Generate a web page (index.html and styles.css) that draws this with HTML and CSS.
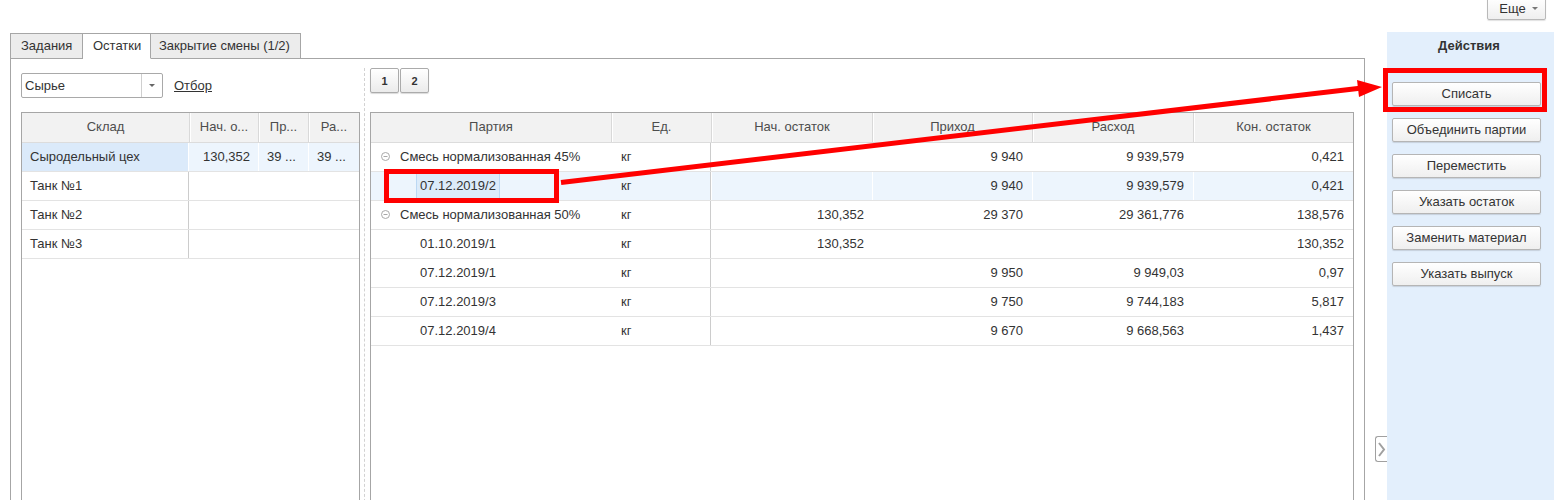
FILE: index.html
```html
<!DOCTYPE html>
<html lang="ru">
<head>
<meta charset="utf-8">
<title>Остатки</title>
<link rel="stylesheet" href="styles.css">
</head>
<body>
<div class="page">
  <div class="topbar">
    <button class="more-btn">Еще <span class="caret"></span></button>
  </div>
  <div class="main">
    <div class="workarea">
      <div class="tabs">
        <div class="tab">Задания</div>
        <div class="tab active">Остатки</div>
        <div class="tab wide">Закрытие смены (1/2)</div>
      </div>
      <div class="tabpanel">
        <div class="leftcol">
          <div class="filter-row">
            <div class="combo">
              <span class="combo-text">Сырье</span>
              <span class="combo-btn"><span class="caret dark"></span></span>
            </div>
            <a class="link">Отбор</a>
          </div>
          <div class="grid grid-left">
            <div class="ghead">
              <div class="hc first">Склад</div>
              <div class="hc">Нач. о...</div>
              <div class="hc">Пр...</div>
              <div class="hc">Ра...</div>
            </div>
            <div class="grow sel">
              <div class="c sep cur">Сыродельный цех</div>
              <div class="c num wsep">130,352</div>
              <div class="c wsep">39 ...</div>
              <div class="c wsep">39 ...</div>
            </div>
            <div class="grow">
              <div class="c sep">Танк №1</div><div class="c"></div><div class="c"></div><div class="c"></div>
            </div>
            <div class="grow">
              <div class="c sep">Танк №2</div><div class="c"></div><div class="c"></div><div class="c"></div>
            </div>
            <div class="grow">
              <div class="c sep">Танк №3</div><div class="c"></div><div class="c"></div><div class="c"></div>
            </div>
          </div>
        </div>
        <div class="splitter"></div>
        <div class="rightcol">
          <div class="pager">
            <button class="pbtn">1</button>
            <button class="pbtn">2</button>
          </div>
          <div class="grid grid-right">
            <div class="ghead">
              <div class="hc first">Партия</div>
              <div class="hc">Ед.</div>
              <div class="hc">Нач. остаток</div>
              <div class="hc">Приход</div>
              <div class="hc">Расход</div>
              <div class="hc">Кон. остаток</div>
            </div>
            <div class="grow">
              <div class="c tree"><svg class="ticon" width="9" height="9" viewBox="0 0 9 9"><circle cx="4.5" cy="4.5" r="4" fill="none" stroke="#a8a8a8"/><line x1="2.5" y1="4.5" x2="6.5" y2="4.5" stroke="#a8a8a8"/></svg>Смесь нормализованная 45%</div>
              <div class="c sep">кг</div>
              <div class="c num"></div>
              <div class="c num">9 940</div>
              <div class="c num">9 939,579</div>
              <div class="c num">0,421</div>
            </div>
            <div class="grow sel">
              <div class="c child"><span class="focus">07.12.2019/2</span></div>
              <div class="c sep wsep">кг</div>
              <div class="c num wsep"></div>
              <div class="c num wsep">9 940</div>
              <div class="c num wsep">9 939,579</div>
              <div class="c num wsep">0,421</div>
            </div>
            <div class="grow">
              <div class="c tree"><svg class="ticon" width="9" height="9" viewBox="0 0 9 9"><circle cx="4.5" cy="4.5" r="4" fill="none" stroke="#a8a8a8"/><line x1="2.5" y1="4.5" x2="6.5" y2="4.5" stroke="#a8a8a8"/></svg>Смесь нормализованная 50%</div>
              <div class="c sep">кг</div>
              <div class="c num">130,352</div>
              <div class="c num">29 370</div>
              <div class="c num">29 361,776</div>
              <div class="c num">138,576</div>
            </div>
            <div class="grow">
              <div class="c child">01.10.2019/1</div>
              <div class="c sep">кг</div>
              <div class="c num">130,352</div>
              <div class="c num"></div>
              <div class="c num"></div>
              <div class="c num">130,352</div>
            </div>
            <div class="grow">
              <div class="c child">07.12.2019/1</div>
              <div class="c sep">кг</div>
              <div class="c num"></div>
              <div class="c num">9 950</div>
              <div class="c num">9 949,03</div>
              <div class="c num">0,97</div>
            </div>
            <div class="grow">
              <div class="c child">07.12.2019/3</div>
              <div class="c sep">кг</div>
              <div class="c num"></div>
              <div class="c num">9 750</div>
              <div class="c num">9 744,183</div>
              <div class="c num">5,817</div>
            </div>
            <div class="grow">
              <div class="c child">07.12.2019/4</div>
              <div class="c sep">кг</div>
              <div class="c num"></div>
              <div class="c num">9 670</div>
              <div class="c num">9 668,563</div>
              <div class="c num">1,437</div>
            </div>
          </div>
        </div>
      </div>
    </div>
    <div class="togglecol">
      <div class="toggle"><svg width="9" height="17" viewBox="0 0 9 17"><polyline points="2,2 7,8.5 2,15" fill="none" stroke="#a0a0a0" stroke-width="2"/></svg></div>
    </div>
    <div class="actions">
      <div class="actions-title">Действия</div>
      <div class="actions-list">
        <button class="abtn">Списать</button>
        <button class="abtn">Объединить партии</button>
        <button class="abtn">Переместить</button>
        <button class="abtn">Указать остаток</button>
        <button class="abtn">Заменить материал</button>
        <button class="abtn">Указать выпуск</button>
      </div>
    </div>
  </div>
  <svg class="annot" width="1554" height="500" viewBox="0 0 1554 500">
    <rect x="386.5" y="171.5" width="170" height="29" fill="none" stroke="#ff0000" stroke-width="5"/>
    <rect x="1385.5" y="70.5" width="159" height="39" fill="none" stroke="#ff0000" stroke-width="5"/>
    <line x1="561" y1="182.5" x2="1362" y2="88" stroke="#ff0000" stroke-width="5"/>
    <polygon points="1357,80 1382,87 1359,97" fill="#ff0000"/>
  </svg>
</div>
</body>
</html>
```
FILE: styles.css
```css
* { box-sizing: border-box; }
html, body { margin: 0; padding: 0; }
body {
  width: 1554px;
  height: 500px;
  overflow: hidden;
  background: #fff;
  font-family: "Liberation Sans", Arial, sans-serif;
  font-size: 13px;
  color: #333;
}
.page { position: relative; width: 1554px; height: 500px; overflow: hidden; }

button { font-family: inherit; font-size: 13px; color: #333; cursor: default; }

.topbar {
  height: 32px;
  display: flex;
  justify-content: flex-end;
  padding-right: 8px;
}
.more-btn {
  margin-top: -3px;
  height: 23px;
  width: 59px;
  padding: 0 0 0 4px;
  border: 1px solid #b9b9b9;
  border-radius: 2px;
  background: linear-gradient(#ffffff, #efefef);
  box-shadow: 0 1px 1px rgba(0,0,0,0.12);
  display: flex;
  align-items: center;
  justify-content: center;
  gap: 6px;
  line-height: 16px;
}
.caret {
  display: inline-block;
  width: 0; height: 0;
  border-left: 3px solid transparent;
  border-right: 3px solid transparent;
  border-top: 3px solid #777;
}
.caret.dark { border-top-color: #666; }

.main {
  display: flex;
  height: 468px;
}
.workarea {
  margin-left: 10px;
  width: 1355px;
  display: flex;
  flex-direction: column;
}
.tabs {
  display: flex;
  margin-top: 1px;
  height: 26px;
  position: relative;
  z-index: 1;
}
.tab {
  height: 26px;
  padding: 0 10px;
  line-height: 24px;
  border: 1px solid #a6a6a6;
  border-left-width: 0;
  background: #ececec;
  color: #333;
  white-space: nowrap;
}
.tab:first-child { border-left-width: 1px; width: 73px; }
.tab:nth-child(2) { width: 68px; }
.tab.wide { width: 150px; padding: 0 8px; }
.tab.active {
  background: #fff;
  border-bottom-color: #fff;
}
.tabpanel {
  margin-top: -1px;
  flex: 1;
  border: 1px solid #a6a6a6;
  border-bottom: none;
  padding: 9px 0 0 10px;
  display: flex;
}
.leftcol { width: 339px; display: flex; flex-direction: column; }
.filter-row {
  margin-top: 5px;
  height: 25px;
  display: flex;
  align-items: center;
}
.combo {
  width: 142px;
  height: 25px;
  border: 1px solid #a9a9a9;
  border-radius: 2px;
  display: flex;
}
.combo-text { flex: 1; padding-left: 3px; line-height: 23px; }
.combo-btn {
  width: 21px;
  border-left: 1px solid #cfcfcf;
  display: flex;
  align-items: center;
  justify-content: center;
}
.link {
  margin-left: 11px;
  text-decoration: underline;
  color: #333;
}
.splitter {
  width: 10px;
  display: flex;
  justify-content: center;
}
.splitter::before {
  content: "";
  display: block;
  margin-left: -1px;
  border-left: 1px dashed #d2d2d2;
  height: 100%;
}
.rightcol { width: 984px; display: flex; flex-direction: column; }
.pager { display: flex; gap: 1px; height: 25px; }
.pbtn {
  width: 29px;
  height: 25px;
  padding: 0;
  border: 1px solid #ababab;
  border-radius: 2px;
  background: linear-gradient(#ffffff, #ebebeb);
  box-shadow: 0 1px 1px rgba(0,0,0,0.15);
  font-size: 11px;
  font-weight: bold;
  color: #333;
}

.grid {
  border: 1px solid #a6a6a6;
  height: 420px;
  background: #fff;
}
.grid-left { margin-top: 14px; }
.grid-right { margin-top: 19px; }
.grid-left .ghead, .grid-left .grow { grid-template-columns: 167px 69px 50px 51px; }
.grid-right .ghead, .grid-right .grow { grid-template-columns: 240px 100px 161px 160px 161px 160px; }

.ghead {
  display: grid;
  height: 30px;
  background: #f2f2f2;
  border-bottom: 1px solid #dcdcdc;
}
.hc {
  text-align: center;
  line-height: 28px;
  color: #4d4d4d;
  border-left: 1px solid #d9d9d9;
  box-shadow: inset 1px 0 #ffffff;
  white-space: nowrap;
  overflow: hidden;
}
.hc.first { border-left: none; box-shadow: none; }

.grow {
  display: grid;
  height: 29px;
  border-bottom: 1px solid #e3e3e3;
}
.c {
  line-height: 28px;
  padding: 0 8px;
  white-space: nowrap;
  overflow: hidden;
}
.num { text-align: right; }
.sep { border-right: 1px solid #cccccc; }
.grid-right .c.sep { padding-left: 9px; border-left: 1px solid transparent; }
.grid-right .num { padding-right: 9px; }
.grid-right .c:nth-child(3) { padding-right: 8px; }
.sel { background: #edf5fd; }
.sel .wsep { border-left: 1px solid #fff; }
.sel .cur { background: #dbeafa; }
.grid-left .sel .c.sep { border-right: 1px solid #fff; }
.grid-left .sel .c.sep + .c { border-left: none; }

.tree { padding-left: 10px; display: flex; align-items: center; }
.ticon { margin-right: 10px; margin-top: -1px; flex: none; }
.child { padding-left: 49px; }
.grow.sel .child { padding-left: 45px; padding-top: 1px; }
.focus {
  display: inline-block;
  height: 26px;
  line-height: 24px;
  padding: 0 3px;
  background: #dcebfa;
  border: 1px solid #bcd8f3;
  vertical-align: top;
}

.togglecol {
  width: 22px;
  padding-left: 10px;
  padding-top: 404px;
}
.toggle {
  width: 12px;
  height: 26px;
  border: 1px solid #a0a0a0;
  border-right: none;
  border-radius: 3px 0 0 3px;
  background: #fff;
  display: flex;
  align-items: center;
  justify-content: center;
}

.actions {
  width: 167px;
  background: #e3effc;
  display: flex;
  flex-direction: column;
  padding: 5px 13px 0 5px;
}
.actions-title {
  text-align: center;
  font-weight: bold;
  line-height: 16px;
  padding-top: 1px;
  padding-left: 5px;
  color: #333;
}
.actions-list {
  margin-top: 28px;
  display: flex;
  flex-direction: column;
  gap: 12px;
}
.abtn {
  width: 149px;
  height: 24px;
  padding: 0;
  border: 1px solid #b5b5b5;
  border-radius: 2px;
  background: linear-gradient(#ffffff, #efefef);
  box-shadow: 0 1px 1px rgba(0,0,0,0.13);
  line-height: 20px;
}

.annot {
  position: absolute;
  left: 0;
  top: 0;
  pointer-events: none;
}
```
